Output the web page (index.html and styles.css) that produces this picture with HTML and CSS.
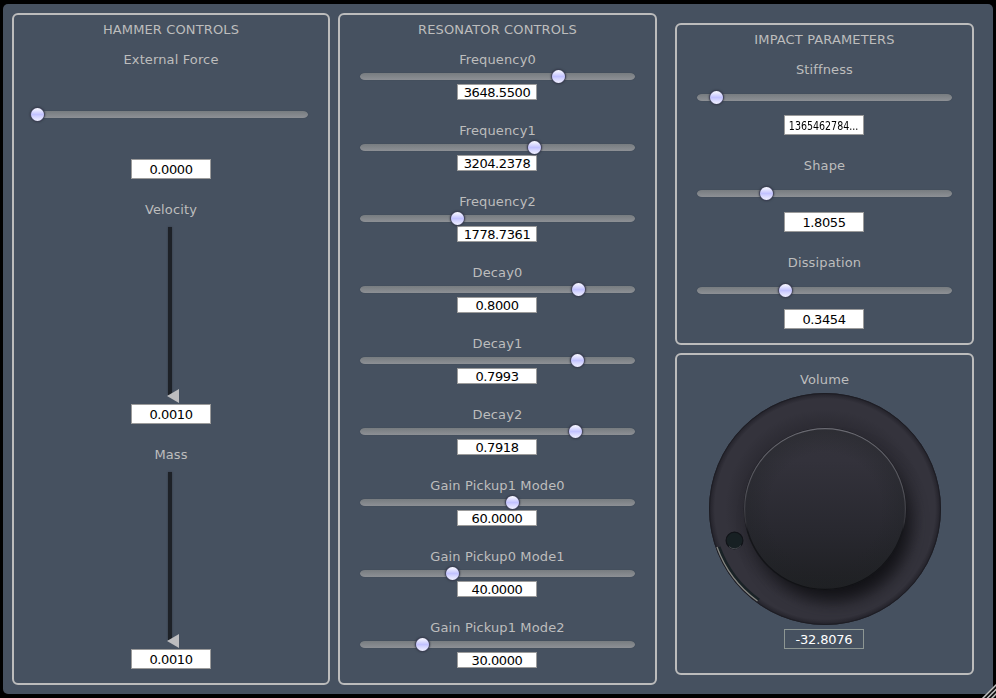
FILE: index.html
```html
<!DOCTYPE html>
<html lang="en">
<head>
<meta charset="utf-8">
<title>Hammer Resonator</title>
<link rel="stylesheet" href="styles.css">
</head>
<body>
<main class="app">
  <section class="panel hammer">
    <h2>HAMMER CONTROLS</h2>
    <div class="control">
      <label>External Force</label>
      <div class="slider"><div class="track"><i class="thumb" style="left:2.6%"></i></div></div>
      <output>0.0000</output>
    </div>
    <div class="control">
      <label>Velocity</label>
      <div class="vslider"><div class="vtrack"></div><i class="pointer"></i></div>
      <output>0.0010</output>
    </div>
    <div class="control">
      <label>Mass</label>
      <div class="vslider"><div class="vtrack"></div><i class="pointer"></i></div>
      <output>0.0010</output>
    </div>
  </section>

  <section class="panel resonator">
    <h2>RESONATOR CONTROLS</h2>
    <div class="control"><label>Frequency0</label><div class="slider"><div class="track"><i class="thumb" style="left:72.3%"></i></div></div><output>3648.5500</output></div>
    <div class="control"><label>Frequency1</label><div class="slider"><div class="track"><i class="thumb" style="left:63.6%"></i></div></div><output>3204.2378</output></div>
    <div class="control"><label>Frequency2</label><div class="slider"><div class="track"><i class="thumb" style="left:35.6%"></i></div></div><output>1778.7361</output></div>
    <div class="control"><label>Decay0</label><div class="slider"><div class="track"><i class="thumb" style="left:79.3%"></i></div></div><output>0.8000</output></div>
    <div class="control"><label>Decay1</label><div class="slider"><div class="track"><i class="thumb" style="left:79.2%"></i></div></div><output>0.7993</output></div>
    <div class="control"><label>Decay2</label><div class="slider"><div class="track"><i class="thumb" style="left:78.5%"></i></div></div><output>0.7918</output></div>
    <div class="control"><label>Gain Pickup1 Mode0</label><div class="slider"><div class="track"><i class="thumb" style="left:55.5%"></i></div></div><output>60.0000</output></div>
    <div class="control"><label>Gain Pickup0 Mode1</label><div class="slider"><div class="track"><i class="thumb" style="left:33.7%"></i></div></div><output>40.0000</output></div>
    <div class="control"><label>Gain Pickup1 Mode2</label><div class="slider"><div class="track"><i class="thumb" style="left:22.8%"></i></div></div><output>30.0000</output></div>
  </section>

  <div class="side">
    <section class="panel impact">
      <h2>IMPACT PARAMETERS</h2>
      <div class="control"><label>Stiffness</label><div class="slider"><div class="track"><i class="thumb" style="left:7.8%"></i></div></div><output><span class="squeezed">1365462784...</span></output></div>
      <div class="control"><label>Shape</label><div class="slider"><div class="track"><i class="thumb" style="left:27.4%"></i></div></div><output>1.8055</output></div>
      <div class="control"><label>Dissipation</label><div class="slider"><div class="track"><i class="thumb" style="left:34.9%"></i></div></div><output>0.3454</output></div>
    </section>
    <section class="panel volume">
      <label>Volume</label>
      <svg class="knob" width="240" height="240" viewBox="0 0 240 240">
        <defs>
          <linearGradient id="cap" x1="0" y1="0" x2="0" y2="1">
            <stop offset="0" stop-color="#34333b"/><stop offset=".2" stop-color="#33323b"/>
            <stop offset=".65" stop-color="#28282f"/><stop offset="1" stop-color="#1e1f22"/>
          </linearGradient>
          <radialGradient id="edge">
            <stop offset=".7" stop-color="#202326" stop-opacity="0"/><stop offset="1" stop-color="#202326" stop-opacity=".35"/>
          </radialGradient>
          <radialGradient id="ring">
            <stop offset=".68" stop-color="#2b2a32"/><stop offset=".86" stop-color="#34333c"/>
            <stop offset=".95" stop-color="#34333c"/><stop offset="1" stop-color="#222129"/>
          </radialGradient>
          <linearGradient id="rim" x1="0" y1="0" x2="0" y2="1">
            <stop offset="0" stop-color="#696971"/><stop offset=".4" stop-color="#4f4f56"/><stop offset=".58" stop-color="#35353b"/><stop offset=".64" stop-color="#15161a"/><stop offset="1" stop-color="#101114"/>
          </linearGradient>
          <filter id="soft" x="-30%" y="-30%" width="160%" height="160%" color-interpolation-filters="sRGB"><feGaussianBlur stdDeviation="9"/></filter>
          <clipPath id="disc"><circle cx="120" cy="120" r="116"/></clipPath>
        </defs>
        <circle cx="120" cy="120" r="116" fill="url(#ring)"/>
        <g clip-path="url(#disc)"><circle cx="128" cy="135" r="76" fill="#111115" filter="url(#soft)"/></g>
        <circle cx="120" cy="120" r="115.5" fill="none" stroke="#1d1d24"/>
        <circle cx="120" cy="120" r="81.3" fill="#17171c"/>
        <circle cx="120" cy="120" r="80.5" fill="url(#cap)"/>
        <circle cx="120" cy="120" r="80.5" fill="url(#edge)"/>
        <circle cx="120" cy="120" r="80.4" fill="none" stroke="url(#rim)" stroke-width="1.2"/>
        <circle cx="29.5" cy="151.5" r="8.4" fill="#172023" stroke="#111318" stroke-width="1.2"/>
        <path d="M24 157.5A8 8 0 0 0 36 156.5" fill="none" stroke="#4d5055" stroke-width=".9"/>
        <path d="M14 158A113 113 0 0 0 54 211" fill="none" stroke="#192226" stroke-width="3"/>
        <path d="M12 158A114.5 114.5 0 0 0 52.5 212" fill="none" stroke="#858681" stroke-width="1.3"/>
      </svg>
      <output class="clear">-32.8076</output>
    </section>
  </div>
  <svg class="grip" width="16" height="16" viewBox="0 0 16 16">
    <path d="M3 17L17 3M7.500 17L17 7.500M12 17L17 12" stroke="#111" stroke-width="2.400"/>
    <path d="M2 17L17 2M6.500 17L17 6.500M11 17L17 11" stroke="#c0c0c0" stroke-width="1.500"/>
  </svg>
</main>
</body>
</html>
```
FILE: styles.css
```css
* { box-sizing: border-box; }
body {
  margin: 0;
  padding: 4px 3px;
  height: 698px;
  overflow: hidden;
  background: #000;
  color: #bdbdbd;
  font: 13px/20px "DejaVu Sans", sans-serif;
}
.app {
  display: flex;
  align-items: flex-start;
  height: 690px;
  padding: 9px;
  background: #465160;
  border-radius: 5px;
}
.panel {
  display: flex;
  flex-direction: column;
  padding: 4px 20px 0;
  border: 2px solid #bcbcbc;
  border-radius: 6px;
}
.hammer { width: 318px; height: 672px; }
.resonator { width: 319px; height: 672px; margin-left: 8px; }
.side {
  display: flex;
  flex-direction: column;
  gap: 8px;
  margin: 10px 0 0 18px;
}
.side .panel { width: 299px; height: 322px; }
h2, label {
  height: 20px;
  line-height: 22px;
  letter-spacing: .13px;
  white-space: nowrap;
}
h2 {
  margin: 0 0 10px;
  font-size: 13px;
  font-weight: normal;
  text-align: center;
}
.control {
  display: flex;
  flex-direction: column;
  align-items: center;
  margin-bottom: 20px;
}
output {
  width: 80px;
  height: 20px;
  border: 1px solid #9b9b9b;
  background: #fff;
  color: #000;
  line-height: 19px;
  letter-spacing: -.4px;
  text-align: center;
  white-space: nowrap;
}
.resonator output, .side output { margin-right: 1px; }
.slider {
  display: flex;
  align-items: center;
  align-self: stretch;
  height: 37px;
}
.track {
  position: relative;
  flex: 1;
  height: 7px;
  border-radius: 5px / 3.5px;
  background: linear-gradient(#777c80, #8d9095);
  box-shadow: 0 0 1px #343d48;
}
.thumb {
  position: absolute;
  top: 50%;
  width: 13px;
  height: 13px;
  margin: -6.5px 0 0 -6.5px;
  border-radius: 50%;
  background: linear-gradient(#f6f6ff 5%, #d0d0ff 38%, #c2c2ff 50%, #d5d5ff 68%, #f0f0ff);
  box-shadow: 0 0 0 .6px #454666, 0 0 2px 1px #303540;
}
.hammer .slider { height: 90px; }
.hammer .track { margin-left: -4px; }
.vslider {
  position: relative;
  width: 80px;
  height: 185px;
  padding: 8px 0 0 37px;
}
.vtrack {
  width: 4px;
  height: 168px;
  background: #1d2127;
  box-shadow: 0 0 2px #303843;
}
.pointer {
  position: absolute;
  left: 36px;
  bottom: 1px;
  width: 12px;
  height: 14px;
  background: #bdbdbf;
  clip-path: polygon(0 50%, 100% 0, 100% 100%);
}
.resonator .slider { height: 15px; }
.resonator output { height: 16px; line-height: 15px; }
.impact .control:nth-child(2) .slider { height: 36px; }
.squeezed {
  display: inline-block;
  letter-spacing: 0;
  transform: scaleX(.73);
  margin: 0 -12px;
}
.volume {
  align-items: center;
  padding-top: 14px;
}
.knob { display: block; flex: none; }
.volume .clear {
  background: none;
  border-color: #8d9693;
  color: #fff;
  letter-spacing: -.2px;
}
.grip {
  position: absolute;
  right: 0;
  bottom: 0;
}
```
